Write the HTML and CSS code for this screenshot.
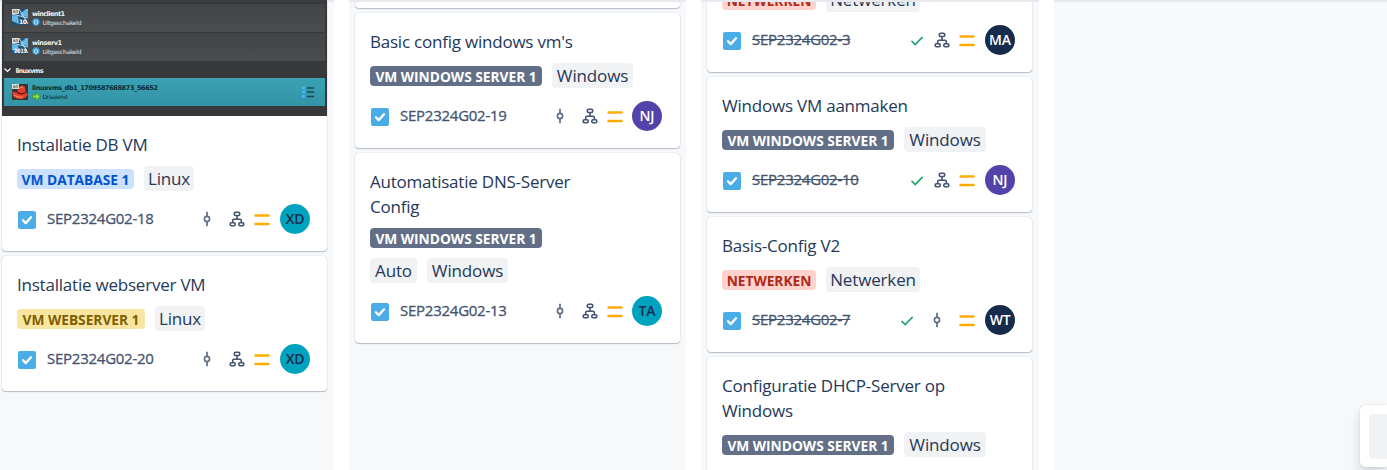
FILE: index.html
```
<!DOCTYPE html>
<html lang="nl">
<head>
<meta charset="utf-8">
<title>Bord</title>
<link rel="stylesheet" href="styles.css">
</head>
<body>
<svg class="sprite" width="0" height="0">
  <defs>
    <symbol id="task" viewBox="0 0 18 18"><rect width="18" height="18" rx="2" fill="#4bade8"/><path d="M5 9.2l2.700 2.900L13 6.300" fill="none" stroke="#fff" stroke-width="2.300" stroke-linecap="round" stroke-linejoin="round"/></symbol>
    <symbol id="commit" viewBox="0 0 20 20"><path d="M10 2.700v4.600M10 12.700v4.600" stroke="#5e6c88" stroke-width="1.700"/><circle cx="10" cy="10" r="2.600" fill="none" stroke="#5e6c88" stroke-width="1.600"/></symbol>
    <symbol id="tree" viewBox="0 0 20 20"><g fill="none" stroke="#44546f" stroke-width="1.600"><rect x="7.300" y="3.200" width="5.400" height="3.300" rx="1.200"/><rect x="3.200" y="13.700" width="5" height="3" rx="1.200"/><rect x="11.800" y="13.700" width="5" height="3" rx="1.200"/><path d="M10 6.500v3.700M5.700 13.500v-2q0-1.300 1.300-1.300h6q1.300 0 1.300 1.300v2"/></g></symbol>
    <symbol id="medium" viewBox="0 0 20 20"><path d="M3.500 6.500h13M3.500 15h13" stroke="#ffab00" stroke-width="2.400" stroke-linecap="round"/></symbol>
    <symbol id="done" viewBox="0 0 20 20"><path d="M5 11.400l3.200 3.200L15.200 7.400" fill="none" stroke="#22a06b" stroke-width="1.600" stroke-linecap="round"/></symbol>
  </defs>
</svg>
<main class="board">
  <section class="column first">
    <div class="list">
      <article class="card">
        <svg class="cover" viewBox="0 0 325 116">
          <defs>
            <linearGradient id="rowbg" x1="0" y1="0" x2="0" y2="1"><stop offset="0" stop-color="#434446"/><stop offset="1" stop-color="#4b4c4e"/></linearGradient>
            <linearGradient id="sel" x1="0" y1="0" x2="0" y2="1"><stop offset="0" stop-color="#39a2b4"/><stop offset="1" stop-color="#3494a5"/></linearGradient>
            <g id="winvm"><rect width="16" height="16" fill="#235174"/><path d="M0 6L6 7L7 15L0 12zM8 5L14 0H16V8L10 7z" fill="#66b8eb"/><path d="M7 0L16 15M0 5L16 9" stroke="#b7dcf3"/><rect width="7" height="5" fill="#ddd"/><text x="1" y="4" class="bit">64</text></g>
            <g id="off"><circle cx="4" cy="4" r="3.700" fill="#3799d7"/><path d="M2.300 2.500Q1.500 6.400 4 6.400T5.700 2.500M4 1.500v2.300" fill="none" stroke="#c9ebfc" stroke-width="1"/></g>
          </defs>
          <rect width="325" height="116" fill="#37383a"/>
          <rect x="2" width="321" height="3" fill="#3c3d3f"/>
          <rect x="2" y="4" width="321" height="28" fill="url(#rowbg)"/>
          <rect x="2" y="33" width="321" height="28" fill="url(#rowbg)"/>
          <rect x="2" y="62" width="321" height="16" fill="#37383a"/>
          <rect x="2" y="78" width="321" height="28" fill="url(#sel)"/>
          <use href="#winvm" x="10" y="9"/><text x="17" y="24" class="badge-text" textLength="8">10</text>
          <use href="#winvm" x="10" y="38"/><text x="12" y="53" class="badge-text" textLength="13" lengthAdjust="spacingAndGlyphs">2019</text>
          <text x="30" y="16" class="vm" textLength="33">winclient1</text>
          <use href="#off" x="30" y="18"/><text x="40.500" y="25" class="state" textLength="39">Uitgeschakeld</text>
          <text x="30" y="45" class="vm" textLength="30">winserv1</text>
          <use href="#off" x="30" y="47"/><text x="40.500" y="54" class="state" textLength="39">Uitgeschakeld</text>
          <path d="M2.500 68.500L5.500 71.500L8.500 68.500" fill="none" stroke="#fff" stroke-width="1.200"/>
          <text x="13.500" y="72.500" class="vm" textLength="28">linuxvms</text>
          <rect x="10" y="84" width="16" height="16" fill="#343335"/>
          <path d="M10.500 91Q9.500 99 18 99Q26 98.500 26 93Q24.500 94 23.500 93L23 87Q20 84 17 87L15 92Q12 93 10.500 91z" fill="#e5402c"/><path d="M15 92Q18 95 23 93" fill="none" stroke="#4d100d" stroke-width="1.200"/><path d="M12 95Q16 98 21 97M18 88l3-1" fill="none" stroke="#fa8c70"/>
          <rect x="10" y="84" width="7" height="5" fill="#ddd"/><text x="11" y="88" class="bit">64</text>
          <text x="30" y="90" class="vm dark" textLength="126">linuxvms_db1_1709587688873_56652</text>
          <path d="M30.500 95h3.500v-2.500l4 4-4 4v-2.500h-3.500z" fill="#83e23b" stroke="#367a22" stroke-width=".6"/>
          <text x="40.500" y="99" class="state dark" textLength="25">Draaiend</text>
          <path d="M305 88h7M305 92h7M305 96.500h7" stroke="#174853" stroke-width="1.300"/><path d="M300 88h3M300 92h3M300 96.500h3" stroke="#47b8ff" stroke-width="2.500"/>
        </svg>
        <div class="body">
          <h3 class="title">Installatie DB VM</h3>
          <div class="tags"><span class="epic blue" style="width:117px">VM DATABASE 1</span><span class="tag" style="width:50px">Linux</span></div>
          <div class="meta"><svg class="type"><use href="#task"/></svg><span class="key">SEP2324G02-18</span><svg class="icon commit"><use href="#commit"/></svg><svg class="icon"><use href="#tree"/></svg><svg class="icon"><use href="#medium"/></svg><span class="avatar teal">XD</span></div>
        </div>
      </article>
      <article class="card">
        <div class="body">
          <h3 class="title">Installatie webserver VM</h3>
          <div class="tags"><span class="epic yellow" style="width:128px">VM WEBSERVER 1</span><span class="tag" style="width:50px">Linux</span></div>
          <div class="meta"><svg class="type"><use href="#task"/></svg><span class="key">SEP2324G02-20</span><svg class="icon commit"><use href="#commit"/></svg><svg class="icon"><use href="#tree"/></svg><svg class="icon"><use href="#medium"/></svg><span class="avatar teal">XD</span></div>
        </div>
      </article>
    </div>
  </section>
  <section class="column second">
    <div class="list">
      <article class="card stub"></article>
      <article class="card">
        <div class="body">
          <h3 class="title">Basic config windows vm's</h3>
          <div class="tags"><span class="epic gray" style="width:172px">VM WINDOWS SERVER 1</span><span class="tag" style="width:81px">Windows</span></div>
          <div class="meta"><svg class="type"><use href="#task"/></svg><span class="key">SEP2324G02-19</span><svg class="icon commit"><use href="#commit"/></svg><svg class="icon"><use href="#tree"/></svg><svg class="icon"><use href="#medium"/></svg><span class="avatar purple">NJ</span></div>
        </div>
      </article>
      <article class="card">
        <div class="body">
          <h3 class="title">Automatisatie DNS-Server<br>Config</h3>
          <div class="tags narrow"><span class="epic gray" style="width:172px">VM WINDOWS SERVER 1</span><span class="tag" style="width:47px">Auto</span><span class="tag" style="width:81px">Windows</span></div>
          <div class="meta"><svg class="type"><use href="#task"/></svg><span class="key">SEP2324G02-13</span><svg class="icon commit"><use href="#commit"/></svg><svg class="icon"><use href="#tree"/></svg><svg class="icon"><use href="#medium"/></svg><span class="avatar teal">TA</span></div>
        </div>
      </article>
    </div>
  </section>
  <section class="column third">
    <div class="list scrolled">
      <article class="card">
        <div class="body">
          <div class="tags"><span class="epic red" style="width:94px">NETWERKEN</span><span class="tag" style="width:94px">Netwerken</span></div>
          <div class="meta"><svg class="type"><use href="#task"/></svg><span class="key closed">SEP2324G02-3</span><svg class="icon"><use href="#done"/></svg><svg class="icon"><use href="#tree"/></svg><svg class="icon"><use href="#medium"/></svg><span class="avatar navy">MA</span></div>
        </div>
      </article>
      <article class="card">
        <div class="body">
          <h3 class="title">Windows VM aanmaken</h3>
          <div class="tags"><span class="epic gray" style="width:172px">VM WINDOWS SERVER 1</span><span class="tag" style="width:82px">Windows</span></div>
          <div class="meta"><svg class="type"><use href="#task"/></svg><span class="key closed">SEP2324G02-10</span><svg class="icon"><use href="#done"/></svg><svg class="icon"><use href="#tree"/></svg><svg class="icon"><use href="#medium"/></svg><span class="avatar purple">NJ</span></div>
        </div>
      </article>
      <article class="card">
        <div class="body">
          <h3 class="title">Basis-Config V2</h3>
          <div class="tags"><span class="epic red" style="width:94px">NETWERKEN</span><span class="tag" style="width:94px">Netwerken</span></div>
          <div class="meta"><svg class="type"><use href="#task"/></svg><span class="key closed">SEP2324G02-7</span><svg class="icon"><use href="#done"/></svg><svg class="icon commit"><use href="#commit"/></svg><svg class="icon"><use href="#medium"/></svg><span class="avatar navy">WT</span></div>
        </div>
      </article>
      <article class="card">
        <div class="body">
          <h3 class="title">Configuratie DHCP-Server op<br>Windows</h3>
          <div class="tags"><span class="epic gray" style="width:172px">VM WINDOWS SERVER 1</span><span class="tag" style="width:82px">Windows</span></div>
        </div>
      </article>
    </div>
  </section>
  <section class="column last"></section>
</main>
<aside class="widget"><span class="widget-button"></span></aside>
</body>
</html>
```
FILE: styles.css
```
* { box-sizing: border-box; }
body { margin: 0; height: 470px; overflow: hidden; background: #fff; font-family: "Open Sans", "Noto Sans", sans-serif; color: #172b4d; }
.sprite { position: absolute; }
.board { display: flex; gap: 15px; height: 470px; }
.column { flex: none; width: 337px; height: 470px; overflow: hidden; background: #f7f8f9; border-top: 2px solid #e8e9ef; padding-left: 6px; }
.column.first { width: 334px; padding-left: 2px; border-top: 0; background: linear-gradient(#e8e9ef 2px, #f7f8f9 2px); }
.column.third { width: 338px; }
.column.last { width: 333px; }
.list { display: flex; flex-direction: column; gap: 5px; width: 325px; margin-top: -2px; }
.first .list { margin-top: 0; }
.list.scrolled { margin-top: -40px; }
.card { flex: none; background: #fff; border-radius: 4px; box-shadow: 0 1px 1px rgba(9, 30, 66, .25), 0 0 1px rgba(9, 30, 66, .31); }
.stub { height: 8px; }
.cover { display: block; width: 325px; height: 116px; }
.body { padding: 16px 17px 17px 15px; }
.title { margin: 0; font-size: 17px; font-weight: 400; line-height: 25px; letter-spacing: -.22px; color: #253858; white-space: nowrap; }
.tags { display: flex; flex-wrap: wrap; align-items: center; gap: 10px; margin-top: 9px; }
.narrow { width: 220px; }
.epic { height: 20px; border-radius: 4px; font-size: 13.75px; font-weight: 700; line-height: 21px; letter-spacing: -.02px; text-align: center; white-space: nowrap; }
.blue { background: #cce0ff; color: #0055cc; }
.yellow { background: #f8e6a0; color: #7f5f01; }
.gray { background: #626f86; color: #fff; }
.red { background: #ffd2cc; color: #ae2a19; }
.tag { height: 25px; border-radius: 4px; background: #f1f2f4; font-size: 17px; font-weight: 400; line-height: 25px; letter-spacing: -.15px; color: #253858; text-align: center; white-space: nowrap; }
.meta { display: flex; align-items: center; gap: 5px; height: 30px; margin-top: 13px; }
.type { width: 18px; height: 18px; margin: 2px 6px 0 1px; }
.key { margin-right: auto; padding-bottom: 2px; font-size: 15px; line-height: 20px; letter-spacing: -.25px; color: #44546f; -webkit-text-stroke: .3px #44546f; }
.closed { text-decoration: line-through; }
.icon { width: 20px; height: 20px; }
.commit { margin: 0 5px; }
.avatar { display: flex; align-items: center; justify-content: center; width: 30px; height: 30px; margin-left: 3px; padding-bottom: 1px; border-radius: 50%; font-size: 14px; font-weight: 600; letter-spacing: -.2px; color: #fff; }
.second .avatar { margin: 0 1px 0 2px; }
.teal { background: #00a3bf; color: #172b4d; }
.purple { background: #5243aa; }
.navy { background: #172b4d; }
.vm { font: 700 6.5px "DejaVu Sans", sans-serif; fill: #f4f4f4; }
.state { font: 6px "DejaVu Sans", sans-serif; fill: #e3e3e3; }
.vm.dark, .state.dark { fill: #092b32; }
.bit { font: 4px "DejaVu Sans", sans-serif; fill: #222; }
.badge-text { font: 700 6px "DejaVu Sans", sans-serif; fill: #fff; }
.widget { position: absolute; left: 1360px; top: 405px; width: 27px; height: 62px; padding: 9px 0 8px 9px; border-radius: 5px 0 0 5px; background: #fff; box-shadow: 0 8px 12px rgba(9, 30, 66, .15), 0 0 1px rgba(9, 30, 66, .31); }
.widget-button { display: block; height: 45px; border-radius: 4px 0 0 4px; background: #f1f2f4; }
```
